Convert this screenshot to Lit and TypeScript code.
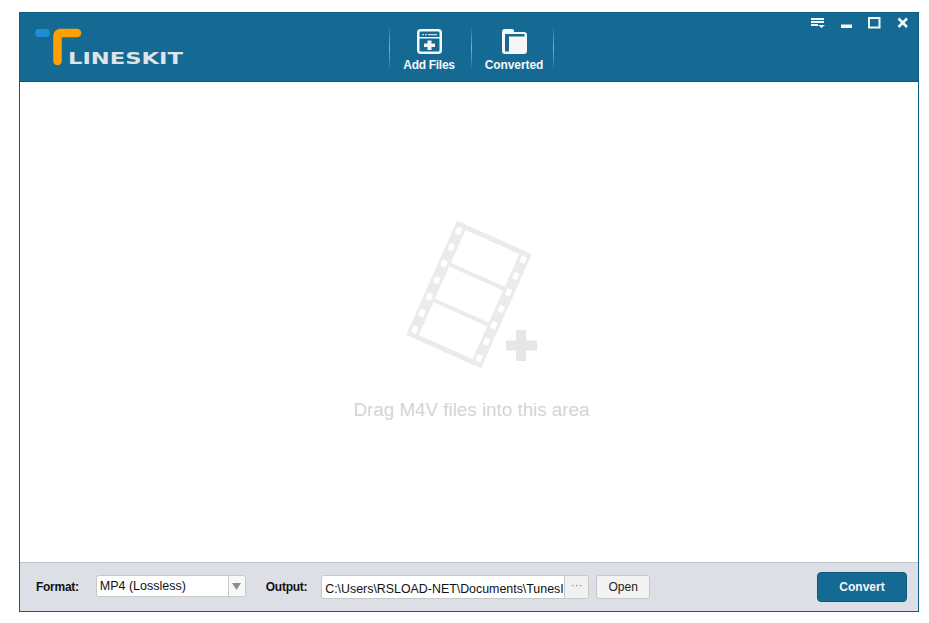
import { LitElement, html, css, svg } from "lit";
import { customElement } from "lit/decorators.js";

const W = 82;
const H = 125;
const holes = [0, 1, 2, 3, 4, 5, 6];

@customElement("app-root")
export class AppRoot extends LitElement {
  static styles = css`
    :host { display: block; font-family: "Liberation Sans", Arial, sans-serif; background: #fff; height: 623px; padding: 12px 0 0 19px; box-sizing: border-box; }
    .win { width: 900px; height: 600px; box-sizing: border-box; border: 1px solid #0f5a7f; display: flex; flex-direction: column; background: #fff; }
    .head { height: 69px; box-sizing: border-box; flex: none; background: #156a93; border-bottom: 1px solid #134f6e; display: flex; position: relative; }
    .logo { width: 369px; flex: none; padding: 15px 0 0 15px; box-sizing: border-box; }
    .logo svg { display: block; }
    .tool { display: flex; }
    .sep { width: 1px; height: 46px; margin-top: 12px; background: linear-gradient(#156a93, #7fb0c8 50%, #156a93); }
    .btn { width: 81px; display: flex; flex-direction: column; align-items: center; color: #f4f7f9; font-size: 12px; font-weight: bold; padding-top: 16px; box-sizing: border-box; }
    .btn svg { display: block; margin-bottom: 4px; }
    .add { letter-spacing: -0.3px; padding-right: 3px; }
    .cnv { padding-left: 3px; letter-spacing: -0.1px; }
    .wc { position: absolute; right: 9px; top: 4px; display: flex; align-items: center; }
    .wc svg { display: block; }
    .wc .w1 { margin-right: 16px; }
    .wc .w2 { margin-right: 16px; }
    .wc .w3 { margin-right: 16px; }
    .main { flex: 1; display: flex; flex-direction: column; align-items: center; padding: 138px 0 0 5px; }
    .main svg { display: block; }
    .main p { margin: 29px 0 0; font-size: 18.8px; line-height: 21px; color: #d4d4d4; }
    .foot { height: 49px; flex: none; box-sizing: border-box; background: #dcdfe6; border-top: 1px solid #c2c4c8; display: flex; align-items: flex-start; padding: 9px 11px 0 16px; font-size: 12px; color: #111; }
    .lbl { font-weight: bold; line-height: 30px; letter-spacing: -0.27px; }
    .sel { margin-left: 17px; margin-top: 3px; width: 150px; height: 22px; box-sizing: border-box; background: #fff; border: 1px solid #c8c8c8; border-radius: 3px; display: flex; align-items: center; font-size: 12.5px; padding-left: 3px; }
    .sel span { flex: 1; }
    .arrow { width: 16px; height: 20px; border-left: 1px solid #c8c8c8; display: flex; align-items: center; justify-content: center; background: #f8f8f8; border-radius: 0 3px 3px 0; }
    .o { margin-left: 20px; }
    .path { margin-left: 14px; margin-top: 3px; width: 268px; height: 24px; box-sizing: border-box; background: #fff; border: 1px solid #c8c8c8; border-radius: 3px; display: flex; align-items: center; padding-left: 3px; font-size: 12.4px; }
    .path span { flex: 1; white-space: nowrap; padding-top: 3px; line-height: 16px; }
    .dots { width: 23px; height: 22px; flex: none; border-left: 1px solid #c8c8c8; background: #f1f1f1; color: #8a8a8a; text-align: center; line-height: 18px; font-size: 12px; border-radius: 0 3px 3px 0; }
    .open { margin-left: 7px; margin-top: 3px; width: 54px; height: 24px; box-sizing: border-box; background: #f3f3f3; border: 1px solid #c8c8c8; border-radius: 3px; text-align: center; line-height: 22px; color: #222; }
    .conv { margin-left: auto; width: 90px; height: 30px; box-sizing: border-box; background: #156a93; border: 1px solid #10587b; border-radius: 4px; color: #f2f6f8; font-weight: bold; text-align: center; line-height: 28px; }
  `;

  film() {
    const s = 11.5;
    const r = W - s;
    return svg`
      <g transform="translate(68 74.5) rotate(24) translate(${-W / 2} ${-H / 2})">
        <path fill="#ebebeb" fill-rule="evenodd" d="M0 0H${W}V${H}H0Z M${s} 5V41H${r}V5Z M${s} 45V80H${r}V45Z M${s} 84V120H${r}V84Z"/>
        ${holes.map((i) => svg`
          <rect x="3" y="${5 + i * 18}" width="5.5" height="7" rx="1" fill="#fff"/>
          <rect x="${W - 8.5}" y="${5 + i * 18}" width="5.5" height="7" rx="1" fill="#fff"/>
        `)}
      </g>
      <path fill="#e6e6e6" d="M115 110h10v10.500h11v10h-11v10.500h-10v-10.500h-10v-10h10z"/>
    `;
  }

  render() {
    return html`
      <div class="win">
        <div class="head">
          <div class="logo">
            <svg width="150" height="40" viewBox="0 0 150 40">
              <rect x="0" y="1" width="15" height="8" rx="4" fill="#1d8ed6"/>
              <path d="M22.500 33V8a3 3 0 0 1 3-3H42" fill="none" stroke="#ffa000" stroke-width="8.500" stroke-linecap="round" stroke-linejoin="round"/>
              <text x="33" y="36" font-family="'DejaVu Sans', sans-serif" font-weight="bold" font-size="16.500" textLength="115" lengthAdjust="spacingAndGlyphs" fill="#dde5ea">LINESKIT</text>
            </svg>
          </div>
          <div class="tool">
            <div class="sep"></div>
            <div class="btn add">
              <svg width="25" height="25" viewBox="0 0 25 25">
                <rect x="1.250" y="1.250" width="22.500" height="22.500" rx="2.500" fill="#156a93" stroke="#f4f6f7" stroke-width="2.500"/>
                <rect x="2" y="8" width="21" height="1.500" fill="#f4f6f7"/>
                <path d="M5 5h2v1.200H5zM8 5h2v1.200H8zM11 5h9v1.200h-9z" fill="#cfdde5"/>
                <path d="M10.500 11.500h4v3h3.500v3.500h-3.500v3h-4v-3H7v-3.500h3.500z" fill="#f4f6f7"/>
              </svg>
              Add Files
            </div>
            <div class="sep"></div>
            <div class="btn cnv">
              <svg width="25" height="25" viewBox="0 0 25 25">
                <path d="M3 0H10a2 2 0 0 1 2 1.500V3H22a3 3 0 0 1 3 3V22a3 3 0 0 1-3 3H3a3 3 0 0 1-3-3V3a3 3 0 0 1 3-3Z" fill="#f4f6f7"/>
                <path d="M3 5H22.500V7.500H7V22.500H3Z" fill="#156a93"/>
              </svg>
              Converted
            </div>
            <div class="sep"></div>
          </div>
          <div class="wc">
            <svg class="w1" width="14" height="12" viewBox="0 0 14 12"><path fill="#f4f6f7" d="M0 1h13v2H0zM0 4h13v2H0zM0 7h7v2H0zM7 8h7l-3.500 3z"/></svg>
            <svg class="w2" width="11" height="12" viewBox="0 0 11 12"><rect x="0" y="7.500" width="11" height="3.500" fill="#f4f6f7"/></svg>
            <svg class="w3" width="13" height="12" viewBox="0 0 13 12"><rect x="1" y="1" width="10.500" height="9.500" fill="none" stroke="#f4f6f7" stroke-width="2"/></svg>
            <svg width="12" height="12" viewBox="0 0 12 12"><path d="M1.500 1.500l8.500 8.500M10 1.500l-8.500 8.500" stroke="#f4f6f7" stroke-width="2.600" fill="none"/></svg>
          </div>
        </div>
        <div class="main">
          <svg width="141" height="150" viewBox="0 0 141 150">${this.film()}</svg>
          <p>Drag M4V files into this area</p>
        </div>
        <div class="foot">
          <div class="lbl">Format:</div>
          <div class="sel"><span>MP4 (Lossless)</span><div class="arrow"><svg width="9" height="7" viewBox="0 0 9 7"><path d="M0 0h9L4.500 7z" fill="#8d8d8d"/></svg></div></div>
          <div class="lbl o">Output:</div>
          <div class="path"><span>C:\\Users\\RSLOAD-NET\\Documents\\TunesI</span><div class="dots">···</div></div>
          <div class="open">Open</div>
          <div class="conv">Convert</div>
        </div>
      </div>
    `;
  }
}
